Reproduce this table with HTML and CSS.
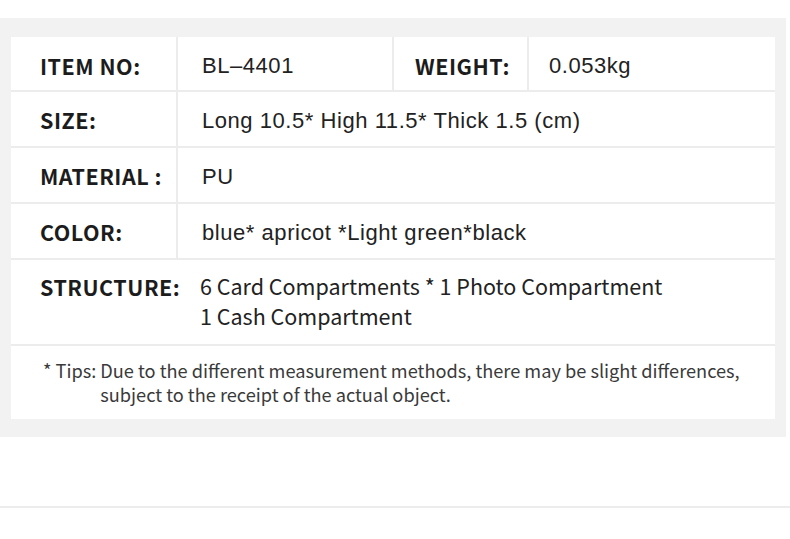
FILE: index.html
```html
<!DOCTYPE html>
<html>
<head>
<meta charset="utf-8">
<link rel="stylesheet" href="styles.css">
</head>
<body>
<div class="page">
  <div class="panel">
    <div class="card">
      <div class="row row-first">
        <div class="label cell">ITEM NO:</div>
        <div class="value cell divided">BL–4401</div>
        <div class="label cell divided label-weight">WEIGHT:</div>
        <div class="value cell divided value-weight">0.053kg</div>
      </div>
      <div class="row">
        <div class="label cell">SIZE:</div>
        <div class="value cell divided">Long 10.5* High 11.5* Thick 1.5 (cm)</div>
      </div>
      <div class="row">
        <div class="label cell">MATERIAL :</div>
        <div class="value cell divided">PU</div>
      </div>
      <div class="row">
        <div class="label cell">COLOR:</div>
        <div class="value cell divided">blue* apricot *Light green*black</div>
      </div>
      <div class="row row-structure">
        <div class="label cell">STRUCTURE:</div>
        <div class="struct-value">6 Card Compartments * 1 Photo Compartment<br>1 Cash Compartment</div>
      </div>
      <div class="tips">
        <span class="tips-mark">* Tips:</span>
        <span class="tips-text">Due to the different measurement methods, there may be slight differences, subject to the receipt of the actual object.</span>
      </div>
    </div>
  </div>
  <div class="rule"></div>
</div>
</body>
</html>
```
FILE: styles.css
```css
* { box-sizing: border-box; }
html, body { margin: 0; padding: 0; background: #ffffff; }
body { width: 790px; height: 539px; overflow: hidden; }

.page { padding-top: 18px; }

.panel {
  width: 786px;
  height: 419px;
  background: #f2f2f2;
  padding: 19px 11px 0 11px;
}

.card {
  width: 764px;
  background: #ffffff;
}

.row {
  display: grid;
  grid-template-columns: 165px 1fr;
  height: 56px;
  border-bottom: 2px solid #ececec;
}
.row-first {
  grid-template-columns: 165px 216px 135px 1fr;
  height: 55px;
}
.row-first .cell { padding-top: 4px; }

.cell {
  display: flex;
  align-items: center;
}
.divided { border-left: 2px solid #ececec; }

.label {
  padding-left: 29px;
  font-family: "Noto Sans CJK SC", "Noto Sans", sans-serif;
  font-weight: 700;
  font-size: 21.5px;
  letter-spacing: 0.5px;
  color: #1c1c1c;
}
.label-weight { padding-left: 21px; }

.value {
  padding-left: 24px;
  padding-top: 3px;
  font-family: "Liberation Sans", Arial, sans-serif;
  font-size: 22px;
  letter-spacing: 0.55px;
  color: #222222;
}
.value-weight { padding-left: 20px; }

.row-structure {
  height: 86px;
  grid-template-columns: 189px 1fr;
  align-items: start;
}
.row-structure .label {
  padding-top: 11px;
  display: block;
}
.struct-value {
  padding-top: 11px;
  font-family: "Noto Sans CJK SC", "Noto Sans", sans-serif;
  font-size: 21.5px;
  line-height: 30px;
  color: #222222;
}

.tips {
  display: flex;
  gap: 4px;
  height: 73px;
  padding: 12px 0 0 32px;
  font-family: "Noto Sans CJK SC", "Noto Sans", sans-serif;
  font-size: 18.2px;
  line-height: 24px;
  color: #3a3a3a;
}
.tips-mark { white-space: nowrap; }
.tips-text { width: 660px; }

.rule {
  margin-top: 69px;
  height: 2px;
  background: #ececec;
}
```
